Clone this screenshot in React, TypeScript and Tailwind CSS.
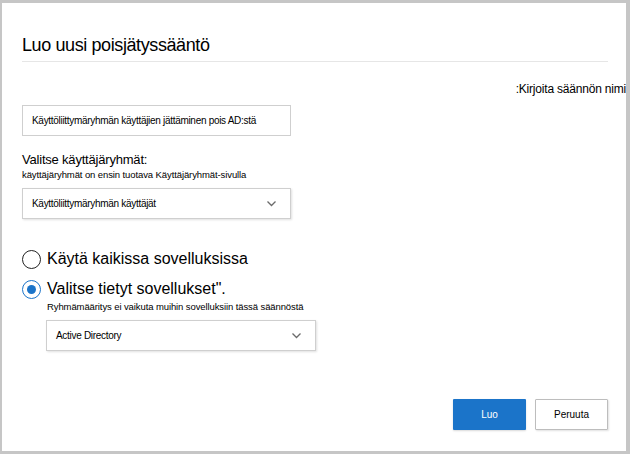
import React, { useState } from 'react';

const font = { fontFamily: '"Liberation Sans", Arial, sans-serif' };

const Chevron: React.FC = () => (
  <svg width="11" height="7" viewBox="0 0 11 7" fill="none">
    <path d="M1.5 1.5 L5.5 5.5 L9.5 1.5" stroke="#6b6b6b" strokeWidth="1.3" />
  </svg>
);

interface SelectBoxProps {
  value: string;
  className?: string;
}

const SelectBox: React.FC<SelectBoxProps> = ({ value, className = '' }) => (
  <div
    className={`flex h-[31px] items-center justify-between border border-[#cfcfcf] bg-white pl-[9px] pr-[13px] shadow-[1px_1px_2px_rgba(0,0,0,0.12)] ${className}`}
  >
    <span className="whitespace-nowrap text-[10px] tracking-[-0.3px] text-black">{value}</span>
    <Chevron />
  </div>
);

const Radio: React.FC<{ checked: boolean; label: string; onClick: () => void }> = ({ checked, label, onClick }) => (
  <div className="flex cursor-pointer items-center" onClick={onClick}>
    <span
      className={`flex h-[19px] w-[19px] items-center justify-center rounded-full border-[1.5px] ${
        checked ? 'border-[#1b74c9]' : 'border-[#222]'
      }`}
    >
      {checked && <span className="h-[9px] w-[9px] rounded-full bg-[#1b74c9]" />}
    </span>
    <span className="ml-[6px] text-[16px] leading-[20px] text-black">{label}</span>
  </div>
);

const App: React.FC = () => {
  const [scope, setScope] = useState<'all' | 'some'>('some');

  return (
    <div className="h-[454px] w-[630px] bg-[#c6c6c6] pb-[3px] pl-[2px] pr-[4px] pt-[3px]" style={font}>
      <div className="flex h-full flex-col overflow-hidden bg-white pl-[20px]">
        <h1 className="mt-[28px] text-[18px] leading-[28px] tracking-[-0.4px] text-black">Luo uusi poisjätyssääntö</h1>
        <div className="mr-[18px] mt-[2px] h-px bg-[#e6e6e6]" />

        <div className="mt-[19px] flex justify-end">
          <span className="whitespace-nowrap text-[12px] leading-[16px] tracking-[-0.2px] text-black">
            :Kirjoita säännön nimi
          </span>
        </div>

        <div className="mt-[8px] flex h-[31px] w-[269px] items-center border border-[#cfcfcf] pl-[9px]">
          <span className="whitespace-nowrap text-[10px] tracking-[-0.3px] text-black">
            Käyttöliittymäryhmän käyttäjien jättäminen pois AD:stä
          </span>
        </div>

        <div className="mt-[16px] text-[13px] leading-[16px] tracking-[-0.2px] text-black">Valitse käyttäjäryhmät:</div>
        <div className="mt-[1px] text-[9.5px] leading-[12px] tracking-[-0.1px] text-black">
          käyttäjäryhmät on ensin tuotava Käyttäjäryhmät-sivulla
        </div>
        <SelectBox value="Käyttöliittymäryhmän käyttäjät" className="mt-[7px] w-[269px]" />

        <div className="mt-[30px] flex flex-col gap-[10px]">
          <Radio checked={scope === 'all'} label="Käytä kaikissa sovelluksissa" onClick={() => setScope('all')} />
          <Radio checked={scope === 'some'} label={'Valitse tietyt sovellukset".'} onClick={() => setScope('some')} />
        </div>
        <div className="ml-[25px] mt-[2px] text-[9.5px] leading-[12px] tracking-[-0.1px] text-black">
          Ryhmämääritys ei vaikuta muihin sovelluksiin tässä säännöstä
        </div>
        <SelectBox value="Active Directory" className="ml-[24px] mt-[7px] w-[270px]" />

        <div className="mr-[18px] mt-[48px] flex justify-end gap-[9px]">
          <button className="h-[31px] w-[73px] rounded-[1px] bg-[#1b74c9] text-[10px] text-white shadow-[0_1px_2px_rgba(0,0,0,0.15)]">
            Luo
          </button>
          <button className="h-[31px] w-[73px] rounded-[1px] border border-[#bdbdbd] bg-white text-[10px] text-black shadow-[1px_1px_2px_rgba(0,0,0,0.12)]">
            Peruuta
          </button>
        </div>
      </div>
    </div>
  );
};

export default App;
